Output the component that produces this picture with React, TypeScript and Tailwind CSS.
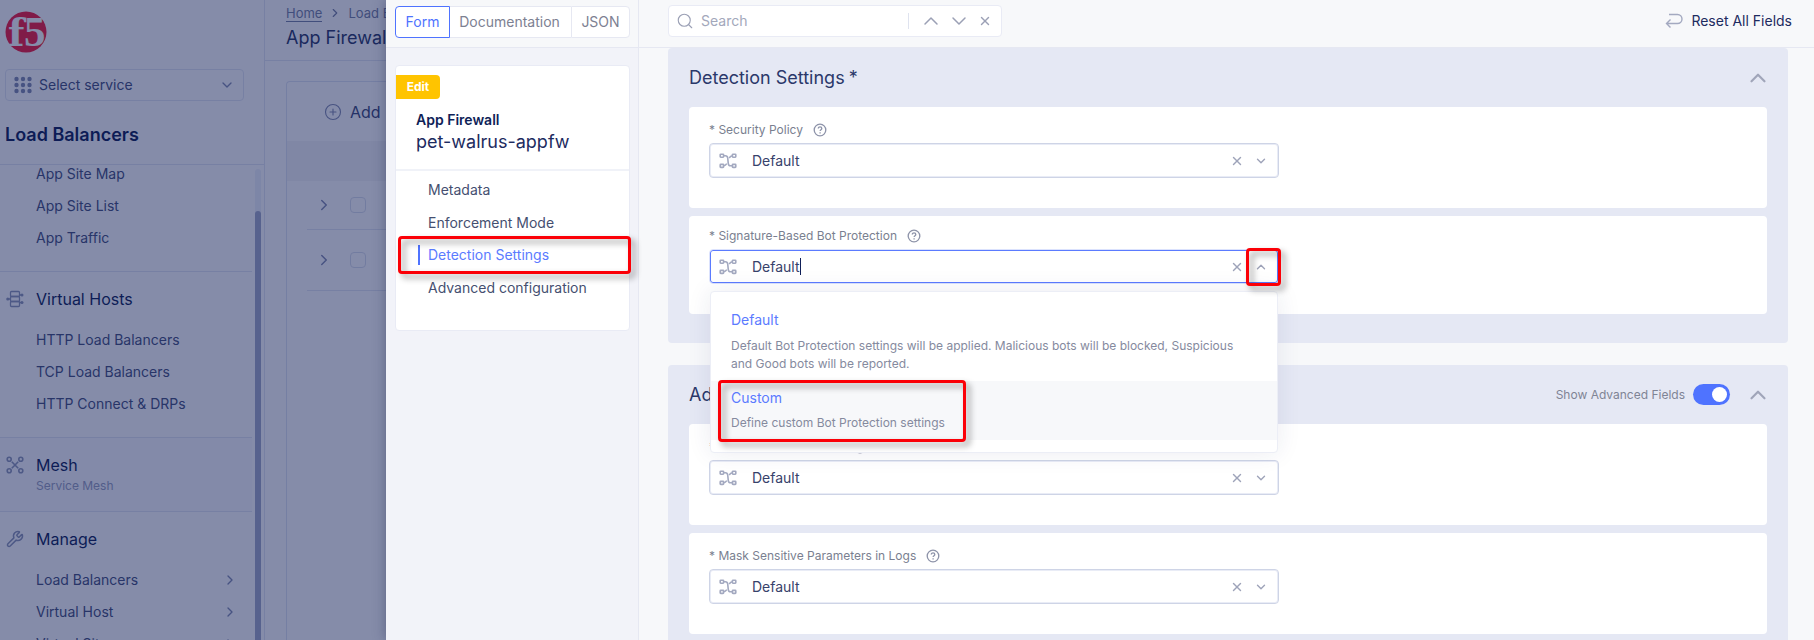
import React from "react";
import { ChevronDown, ChevronRight, ChevronUp, CirclePlus, Search, Wrench, X } from "lucide-react";

function Logo() {
  return (
    <svg width="42" height="42" viewBox="0 0 42 42" role="img" aria-label="f5">
      <circle cx="21" cy="21" r="20.5" fill="#f51d3c" />
      <g fill="#ffffff" fontWeight="bold">
        <text x="3" y="35" fontSize="38" fontFamily="DejaVu Serif, serif">f</text>
        <text x="19" y="35" fontSize="43" fontFamily="Liberation Serif, serif">5</text>
      </g>
    </svg>
  );
}

function GridDots() {
  return (
    <svg width="18" height="18" viewBox="0 0 18 18" fill="#838cb0" aria-hidden="true">
      {[3, 9, 15].map((y) => [2.5, 9, 15.5].map((x) => <circle key={`${x}-${y}`} cx={x} cy={y} r="2.2" />))}
    </svg>
  );
}

function HostsIcon() {
  return (
    <svg width="18" height="18" viewBox="0 0 18 18" fill="none" stroke="#8f98b8" strokeWidth="1.3" aria-hidden="true">
      <rect x="4.5" y="1.5" width="9" height="5" rx="1" />
      <rect x="4.5" y="6.5" width="9" height="5" rx="1" />
      <rect x="4.5" y="11.5" width="9" height="5" rx="1" />
      <path d="M1 9h4M13 5h3M13 12.500h3" />
      <g fill="#8f98b8" stroke="none">
        <circle cx="1.8" cy="9" r="1.6" />
        <circle cx="16" cy="5" r="1.5" />
        <circle cx="16" cy="12.5" r="1.5" />
      </g>
    </svg>
  );
}

function MeshIcon() {
  return (
    <svg width="18" height="18" viewBox="0 0 18 18" fill="none" stroke="#8f98b8" strokeWidth="1.6" aria-hidden="true">
      <circle cx="3.2" cy="3.2" r="2" />
      <circle cx="14.8" cy="3.2" r="2" />
      <circle cx="3.2" cy="14.8" r="2" />
      <circle cx="14.8" cy="14.8" r="2" />
      <path d="M5.8 5.8l6.4 6.4M12.2 5.8l-6.4 6.4" />
    </svg>
  );
}

function BranchIcon() {
  return (
    <svg width="18" height="16" viewBox="0 0 18 16" fill="none" stroke="#a3a9c0" strokeWidth="1.6" className="shrink-0" aria-hidden="true">
      <rect x="1.2" y="1.2" width="3.4" height="3" rx="0.6" />
      <rect x="13.4" y="1.2" width="3.4" height="3" rx="0.6" />
      <rect x="1.2" y="11.4" width="3.4" height="3" rx="0.6" />
      <rect x="13.4" y="11.4" width="3.4" height="3" rx="0.6" />
      <path d="M4.6 2.8h1.9c1.4 0 2 .8 2.200 2.200l.6 5.600c.2 1.400.8 2.200 2.200 2.200h1.900" />
      <path d="M13.400 2.800c-1.800.2-2.400 1-3.200 2.200M4.600 12.800c1.800-.2 2.400-1 3.200-2.200" />
    </svg>
  );
}

function HelpIcon() {
  return (
    <svg width="14" height="14" viewBox="0 0 14 14" fill="none" stroke="#8d93a9" strokeWidth="1.3" aria-hidden="true">
      <circle cx="7" cy="7" r="5.8" />
      <path d="M5.300 5.600c0-2.300 3.500-2.200 3.500-.1 0 1.200-1.700 1.200-1.700 2.500M7.100 9.300v1.200" />
    </svg>
  );
}

function ResetIcon() {
  return (
    <svg width="18" height="16" viewBox="0 0 18 16" fill="none" stroke="#a3a9c0" strokeWidth="1.4" aria-hidden="true">
      <path d="M4 1.500h8.500a4.500 4.500 0 0 1 0 9H1.500M5.500 6.500l-4 4 4 4" />
    </svg>
  );
}

function Highlight({ className }: { className: string }) {
  return (
    <span
      aria-hidden="true"
      className={`pointer-events-none absolute z-20 rounded border-3 border-[#fb0007] drop-shadow-[4px_4px_3px_rgba(0,0,0,0.4)] ${className}`}
    />
  );
}

function NavLinks({ items, arrows }: { items: string[]; arrows?: boolean }) {
  return (
    <ul>
      {items.map((item) => (
        <li key={item}>
          <a href="#" className="flex h-8 items-center justify-between pr-3.5 pl-9 text-sm text-[#45517d]">
            {item}
            {arrows && <ChevronRight size={16} className="text-[#838cb0]" />}
          </a>
        </li>
      ))}
    </ul>
  );
}

function Sidebar() {
  return (
    <aside className="flex w-[265px] shrink-0 flex-col border-r border-[#e3e7f2]">
      <div className="px-[5px] pt-[11px]">
        <Logo />
        <button className="mt-4 flex h-8 w-[239px] items-center rounded border border-[#e3e7f2] px-2 text-sm text-[#45517d]">
          <GridDots />
          <span className="ml-[7px]">Select service</span>
          <ChevronDown size={16} className="ml-auto text-[#838cb0]" />
        </button>
      </div>
      <h2 className="mt-[19px] h-11 pt-px pl-[5px] text-lg font-semibold text-[#0f1f58]">Load Balancers</h2>
      <div className="flex min-h-0 flex-1 border-t border-[#e3e7f2]">
        <nav className="w-[252px] overflow-hidden">
          <div className="border-b border-[#e3e7f2] pb-[17px]">
            <div className="-mt-[7px]">
              <NavLinks items={["App Site Map", "App Site List", "App Traffic"]} />
            </div>
          </div>
          <div className="border-b border-[#e3e7f2] pt-[13px] pb-[17px]">
            <h3 className="flex h-7 items-center pl-1.5 text-base text-[#0f1f58]">
              <span className="w-[30px]"><HostsIcon /></span>
              Virtual Hosts
            </h3>
            <div className="mt-[11px]">
              <NavLinks items={["HTTP Load Balancers", "TCP Load Balancers", "HTTP Connect & DRPs"]} />
            </div>
          </div>
          <div className="border-b border-[#e3e7f2] bg-[#fafbff] pt-[15px] pb-4">
            <h3 className="flex h-6 items-center pl-1.5 text-base text-[#0f1f58]">
              <span className="w-[30px]"><MeshIcon /></span>
              Mesh
            </h3>
            <p className="pl-9 text-xs leading-[18px] text-[#98a0be]">Service Mesh</p>
          </div>
          <div className="pt-[13px]">
            <h3 className="flex h-7 items-center pl-1.5 text-base text-[#0f1f58]">
              <span className="w-[30px]"><Wrench size={18} className="text-[#8f98b8]" /></span>
              Manage
            </h3>
            <div className="mt-[11px]">
              <NavLinks items={["Load Balancers", "Virtual Host", "Virtual Site"]} arrows />
            </div>
          </div>
        </nav>
        <div className="mt-1 ml-[3px] w-[6px] rounded-full bg-[#eff2fb]">
          <div className="mt-[42px] h-full rounded-full bg-[#a3abc8]" />
        </div>
      </div>
    </aside>
  );
}

function Background() {
  return (
    <div className="flex h-full">
      <Sidebar />
      <main className="min-w-0 flex-1">
        <div className="h-[61px] border-b border-[#e3e7f2] pt-[3px] pl-[21px]">
          <nav className="flex items-center gap-1.5 text-[13px] leading-5 text-[#7782a4]">
            <a href="#" className="border-b border-[#7782a4] leading-4">Home</a>
            <ChevronRight size={14} />
            <a href="#">Load Balancers</a>
          </nav>
          <h1 className="mt-px text-lg leading-7 text-[#2b3968]">App Firewall</h1>
        </div>
        <section className="mt-5 ml-[21px] h-full rounded-tl border-t border-l border-[#dfe4f2]">
          <button className="flex h-[59px] items-center gap-2 pl-[37px] text-base text-[#3d4a78]">
            <CirclePlus size={18} strokeWidth={1.5} className="text-[#838cb0]" />
            Add
          </button>
          <div className="h-10 bg-[#f5f5f7]" />
          {["first", "second"].map((row) => (
            <div key={row} className="ml-5 flex h-[49px] items-center gap-[17px] border-b border-[#e3e7f2] pl-2 nth-[n+4]:h-[61px]">
              <ChevronRight size={18} className="text-[#838cb0]" />
              <input type="checkbox" aria-label={`Select ${row} firewall`} className="size-4 appearance-none rounded border border-[#d9deec]" />
            </div>
          ))}
        </section>
      </main>
    </div>
  );
}

function FormNav() {
  return (
    <aside className="flex w-[253px] shrink-0 flex-col border-r border-[#e6e8f2] bg-[#f2f3f9]">
      <div className="flex h-12 shrink-0 border-b border-[#e6e8f2] bg-[#f7f8fa] pt-1.5 pl-[9px]">
        <div className="flex h-8 text-sm text-[#7d8192]">
          <button className="w-[55px] rounded-l border border-[#4f73ff] bg-white text-[#4f73ff]">Form</button>
          <button className="w-[121px] border-y border-[#e6e8f2] bg-white pr-0.5">Documentation</button>
          <button className="w-[59px] rounded-r border border-[#e6e8f2] bg-white">JSON</button>
        </div>
      </div>
      <div className="mt-[17px] mr-2 ml-[9px] rounded border border-[#e9ebf5] bg-white pt-[9px] pb-[26px]">
        <span className="block h-6 w-11 rounded-r bg-[#ffc400] text-center text-xs leading-6 font-bold text-white">Edit</span>
        <div className="mt-[11px] h-[61px] border-b-2 border-[#f0f2f8] pl-5">
          <p className="text-sm leading-5 font-semibold text-[#0f1f58]">App Firewall</p>
          <h2 className="text-lg leading-6 text-[#1d2b60]">pet-walrus-appfw</h2>
        </div>
        <ul className="pt-[3px] text-sm text-[#454f70]">
          <li><a href="#" className="flex h-8 items-center pl-8">Metadata</a></li>
          <li><a href="#" className="flex h-[33px] items-center pl-8">Enforcement Mode</a></li>
          <li className="relative">
            <a href="#" className="flex h-8 items-center gap-2 pl-[22px] text-[#5b7bff]">
              <span className="h-5 w-0.5 bg-[#4f73ff]" />
              Detection Settings
            </a>
            <Highlight className="-top-[3px] -right-[2px] left-[2px] h-[38px]" />
          </li>
          <li><a href="#" className="flex h-[33px] items-center pl-8">Advanced configuration</a></li>
        </ul>
      </div>
    </aside>
  );
}

function FieldLabel({ id, text }: { id: string; text: string }) {
  return (
    <label htmlFor={id} className="flex h-5 items-center gap-2.5 text-xs text-[#7a7f90]">
      <span>* {text}</span>
      <HelpIcon />
    </label>
  );
}

function ClearButton() {
  return (
    <button aria-label="Clear" className="mr-1 ml-auto grid size-6 place-items-center text-[#9ea3b9]">
      <X size={14} strokeWidth={2.4} />
    </button>
  );
}

function SelectField({ id, label }: { id: string; label: string }) {
  return (
    <div className="rounded bg-white px-5 pt-[13px] pb-[30px]">
      <FieldLabel id={id} text={label} />
      <div className="mt-[3px] flex h-[35px] w-full max-w-[570px] items-center rounded border border-[#ced4e6] px-[9px] shadow-[inset_0_0_0_1px_#e9ecf6]">
        <BranchIcon />
        <select id={id} className="ml-[15px] flex-1 appearance-none bg-transparent text-sm text-[#37426b]">
          <option>Default</option>
        </select>
        <ClearButton />
        <ChevronDown size={14} strokeWidth={2.4} className="mx-px text-[#9ea3b9]" />
      </div>
    </div>
  );
}

function OpenSelectField() {
  return (
    <div className="rounded bg-white px-5 pt-2.5 pb-[30px]">
      <FieldLabel id="bot-protection" text="Signature-Based Bot Protection" />
      <div className="relative mt-[3px] max-w-[570px]">
        <div className="flex h-[35px] items-center rounded border border-[#dbe2fd] px-[9px] shadow-[inset_0_0_0_1px_#5b7bff]">
          <BranchIcon />
          <input
            id="bot-protection"
            role="combobox"
            aria-expanded="true"
            aria-controls="bot-protection-options"
            defaultValue="Default"
            className="ml-[15px] field-sizing-content bg-transparent text-sm text-[#37426b] caret-transparent outline-none"
          />
          <span className="h-[17px] w-px bg-[#0f1f58]" />
          <ClearButton />
          <button aria-label="Close options" className="px-px text-[#9ea3b9]">
            <ChevronUp size={14} strokeWidth={2.4} />
          </button>
        </div>
        <Highlight className="-top-px -right-[2px] h-[38px] w-[35px]" />
        <ul
          id="bot-protection-options"
          role="listbox"
          className="absolute inset-x-px top-[42px] z-10 rounded border border-[#eceef6] bg-white pt-4 pb-3 text-xs leading-[18px] text-[#858a9e] shadow-[0_0_24px_rgba(30,45,100,0.09)]"
        >
          <li role="option" aria-selected="true" className="px-5 pb-2">
            <p className="pb-[5px] text-sm leading-6 text-[#5b7bff]">Default</p>
            <p>Default Bot Protection settings will be applied. Malicious bots will be blocked, Suspicious and Good bots will be reported.</p>
          </li>
          <li role="option" aria-selected="false" className="relative bg-[#f7f8fa] px-5 pt-[5px] pb-2">
            <p className="pb-1 text-sm leading-6 text-[#5b7bff]">Custom</p>
            <p>Define custom Bot Protection settings</p>
            <Highlight className="-top-px -bottom-[2px] left-[7px] w-[248px]" />
          </li>
        </ul>
      </div>
    </div>
  );
}

function FormPane() {
  return (
    <div className="flex min-w-0 flex-1 flex-col bg-[#f7f8fa]">
      <header className="flex h-12 shrink-0 items-center justify-between border-b border-[#e6e8f2] pr-[22px] pl-[29px]">
        <div className="-mt-1.5 flex h-8 w-[334px] items-center rounded border border-[#e9ebf5] bg-white pr-1 pl-[7px] text-[#9ba0b5]">
          <Search size={18} strokeWidth={1.5} />
          <input type="search" aria-label="Search" placeholder="Search" className="ml-[7px] min-w-0 flex-1 text-sm outline-none placeholder:text-[#a3a8bb]" />
          <span className="h-4 w-px bg-[#dfe3ef]" />
          <button aria-label="Previous match" className="ml-2 grid w-7 place-items-center"><ChevronUp size={24} strokeWidth={1.5} /></button>
          <button aria-label="Next match" className="grid w-7 place-items-center"><ChevronDown size={24} strokeWidth={1.5} /></button>
          <button aria-label="Clear search" className="grid w-6 place-items-center"><X size={14} strokeWidth={2.4} /></button>
        </div>
        <button className="-mt-1.5 flex items-center gap-2 text-sm text-[#1d2b60]">
          <ResetIcon />
          Reset All Fields
        </button>
      </header>
      <div className="flex min-h-0 flex-1 flex-col gap-[22px] overflow-hidden pr-[26px] pl-[29px]">
        <section className="shrink-0 rounded bg-[#e5e8f4] px-[21px] pb-[29px]">
          <div className="flex h-[59px] items-center justify-between">
            <h2 className="flex gap-1 text-lg text-[#2b386a]">Detection Settings<span>*</span></h2>
            <button aria-label="Collapse Detection Settings" className="-mr-1 text-[#a0a5b9]"><ChevronUp size={26} /></button>
          </div>
          <div className="flex flex-col gap-2">
            <SelectField id="security-policy" label="Security Policy" />
            <OpenSelectField />
          </div>
        </section>
        <section className="shrink-0 rounded bg-[#e5e8f4] px-[21px] pb-[29px]">
          <div className="flex h-[59px] items-center">
            <h2 className="text-lg text-[#2b386a]">Advanced</h2>
            <label className="ml-auto flex items-center gap-2 text-xs text-[#7f8495]">
              Show Advanced Fields
              <input
                type="checkbox"
                role="switch"
                defaultChecked
                className="flex h-[21px] w-[37px] appearance-none items-center justify-end rounded-full bg-[#4f73ff] pr-[3px] before:size-[15px] before:rounded-full before:bg-white"
              />
            </label>
            <button aria-label="Collapse advanced section" className="-mr-1 ml-[15px] text-[#a0a5b9]"><ChevronUp size={26} /></button>
          </div>
          <div className="flex flex-col gap-2">
            <SelectField id="response-codes" label="Allowed Status Codes" />
            <SelectField id="mask-logs" label="Mask Sensitive Parameters in Logs" />
          </div>
        </section>
      </div>
    </div>
  );
}

export default function App() {
  return (
    <div className="h-screen overflow-hidden bg-white font-['Inter',sans-serif]">
      <Background />
      <div className="fixed inset-0 flex bg-[#0b1953]/50 pl-[386px]">
        <div className="flex min-w-0 flex-1 shadow-[0_0_12px_rgba(10,20,60,0.35)]">
          <FormNav />
          <FormPane />
        </div>
      </div>
    </div>
  );
}
